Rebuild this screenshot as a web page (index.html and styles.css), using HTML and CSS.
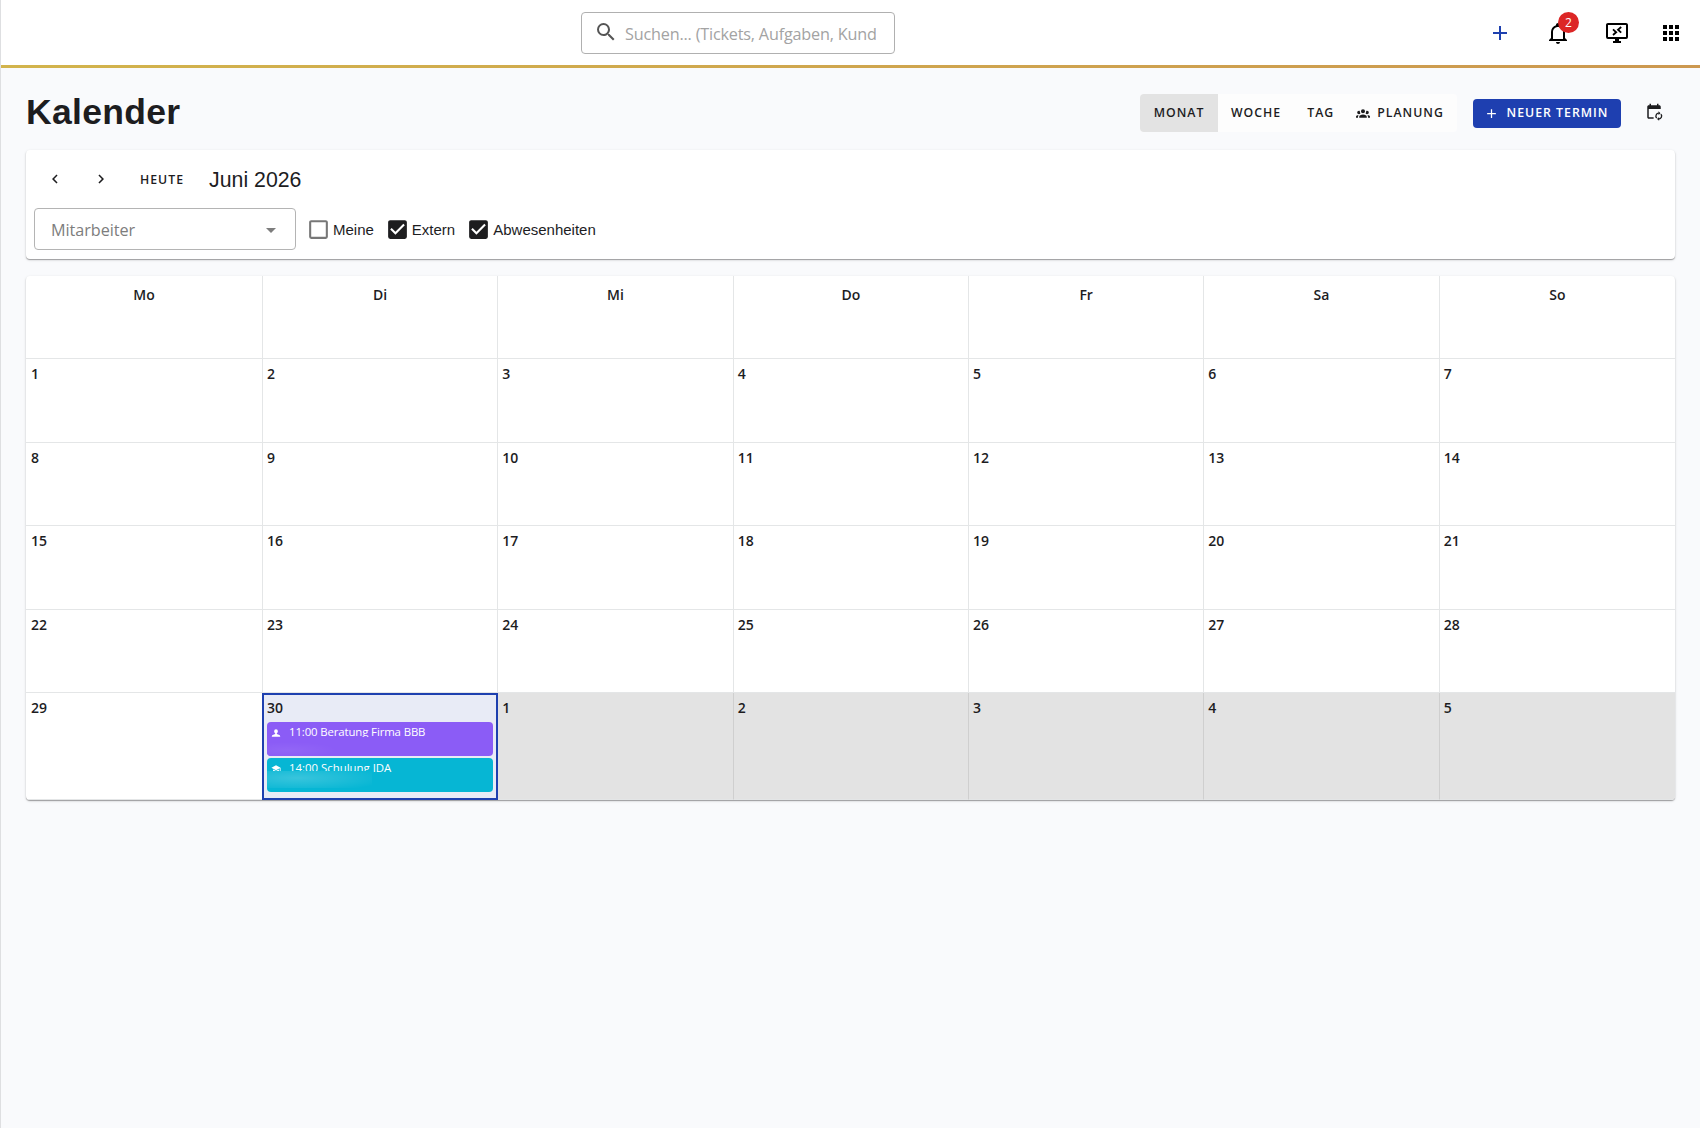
FILE: index.html
```html
<!DOCTYPE html>
<html lang="de">
<head>
    <meta charset="UTF-8">
    <meta name="viewport" content="width=device-width, initial-scale=1.0">
    <title>Kalender</title>
    <link rel="stylesheet" href="styles.css">
</head>
<body>
    <header class="topbar">
        <div class="search">
            <svg class="icon" viewBox="0 0 24 24"><path d="M9.5,3A6.5,6.5 0 0,1 16,9.5C16,11.11 15.41,12.59 14.44,13.73L14.71,14H15.5L20.5,19L19,20.5L14,15.5V14.71L13.73,14.44C12.59,15.41 11.11,16 9.5,16A6.5,6.5 0 0,1 3,9.5A6.5,6.5 0 0,1 9.5,3M9.5,5C7,5 5,7 5,9.5C5,12 7,14 9.5,14C12,14 14,12 14,9.5C14,7 12,5 9.5,5Z"/></svg>
            <input class="search-text" type="text" placeholder="Suchen... (Tickets, Aufgaben, Kunden)">
        </div>
        <nav class="top-actions">
            <button class="top-btn add"><svg class="icon" viewBox="0 0 24 24"><path d="M19,13H13V19H11V13H5V11H11V5H13V11H19V13Z"/></svg></button>
            <button class="top-btn bell"><svg class="icon" viewBox="0 0 24 24"><path d="M10 21H14C14 22.1 13.1 23 12 23S10 22.1 10 21M21 19V20H3V19L5 17V11C5 7.9 7 5.2 10 4.3V4C10 2.9 10.9 2 12 2S14 2.9 14 4V4.3C17 5.2 19 7.9 19 11V17L21 19M17 11C17 8.2 14.8 6 12 6S7 8.2 7 11V18H17V11Z"/></svg><span class="badge">2</span></button>
            <button class="top-btn remote"><svg class="icon" viewBox="0 0 24 24"><path d="M21,16H3V4H21M21,2H3C1.89,2 1,2.89 1,4V16A2,2 0 0,0 3,18H10V20H8V22H16V20H14V18H21A2,2 0 0,0 23,16V4C23,2.89 22.1,2 21,2Z"/><path class="stroke" d="M8,8.4L11.2,11.2L8,14M16.2,6L13,8.8L16.2,11.6"/></svg></button>
            <button class="top-btn apps"><svg class="icon" viewBox="0 0 24 24"><path d="M16,20H20V16H16M16,14H20V10H16M10,8H14V4H10M16,8H20V4H16M10,14H14V10H10M4,14H8V10H4M4,20H8V16H4M10,20H14V16H10M4,8H8V4H4V8Z"/></svg></button>
        </nav>
    </header>

    <main class="page">
        <div class="page-head">
            <h1>Kalender</h1>
            <div class="view-toggle">
                <button class="view active">Monat</button>
                <button class="view">Woche</button>
                <button class="view">Tag</button>
                <button class="view planning"><svg class="icon" viewBox="0 0 24 24"><path d="M12,5.5A3.5,3.5 0 0,1 15.5,9A3.5,3.5 0 0,1 12,12.5A3.5,3.5 0 0,1 8.5,9A3.5,3.5 0 0,1 12,5.5M5,8C5.56,8 6.08,8.15 6.53,8.42C6.38,9.85 6.8,11.27 7.66,12.38C7.16,13.34 6.16,14 5,14A3,3 0 0,1 2,11A3,3 0 0,1 5,8M19,8A3,3 0 0,1 22,11A3,3 0 0,1 19,14C17.84,14 16.84,13.34 16.34,12.38C17.2,11.27 17.62,9.85 17.47,8.42C17.92,8.15 18.44,8 19,8M5.5,18.25C5.5,16.18 8.41,14.5 12,14.5C15.59,14.5 18.5,16.18 18.5,18.25V20H5.5V18.25M0,20V18.5C0,17.11 1.89,15.94 4.45,15.6C3.86,16.28 3.5,17.22 3.5,18.25V20H0M24,20H20.5V18.25C20.5,17.22 20.14,16.28 19.55,15.6C22.11,15.94 24,17.11 24,18.5V20Z"/></svg><span>Planung</span></button>
            </div>
            <button class="new-btn"><svg class="icon" viewBox="0 0 24 24"><path d="M19,13H13V19H11V13H5V11H11V5H13V11H19V13Z"/></svg><span>Neuer Termin</span></button>
            <button class="sync-btn"><svg class="icon" viewBox="0 0 24 24"><path d="M19,3H18V1H16V3H8V1H6V3H5C3.9,3 3,3.9 3,5V19C3,20.1 3.9,21 5,21H11.5V19H5V8H21V5C21,3.9 20.1,3 19,3Z"/><path class="stroke" d="M15.6,20.2A3.9,3.9 0 0,1 18.5,13.6M21.2,14.8A3.9,3.9 0 0,1 18.3,21.3"/><path d="M18,11.1L20.7,13.6L18,16.1ZM18.8,18.8L16,21.3L18.8,23.8Z"/></svg></button>
        </div>

        <section class="card filters">
            <div class="period">
                <button class="nav-btn"><svg class="icon" viewBox="0 0 24 24"><path d="M15.41,16.58L10.83,12L15.41,7.41L14,6L8,12L14,18L15.41,16.58Z"/></svg></button>
                <button class="nav-btn"><svg class="icon" viewBox="0 0 24 24"><path d="M8.59,16.58L13.17,12L8.59,7.41L10,6L16,12L10,18L8.59,16.58Z"/></svg></button>
                <button class="today">Heute</button>
                <h2>Juni 2026</h2>
            </div>
            <div class="filter-row">
                <div class="select"><span>Mitarbeiter</span><svg class="icon" viewBox="0 0 24 24"><path d="M7,10L12,15L17,10H7Z"/></svg></div>
                <label class="check"><svg class="icon off" viewBox="0 0 24 24"><path d="M19,3H5C3.89,3 3,3.89 3,5V19A2,2 0 0,0 5,21H19A2,2 0 0,0 21,19V5C21,3.89 20.1,3 19,3M19,5V19H5V5H19Z"/></svg>Meine</label>
                <label class="check"><svg class="icon" viewBox="0 0 24 24"><path d="M10,17L5,12L6.41,10.58L10,14.17L17.59,6.58L19,8M19,3H5C3.89,3 3,3.89 3,5V19A2,2 0 0,0 5,21H19A2,2 0 0,0 21,19V5C21,3.89 20.1,3 19,3Z"/></svg>Extern</label>
                <label class="check"><svg class="icon" viewBox="0 0 24 24"><path d="M10,17L5,12L6.41,10.58L10,14.17L17.59,6.58L19,8M19,3H5C3.89,3 3,3.89 3,5V19A2,2 0 0,0 5,21H19A2,2 0 0,0 21,19V5C21,3.89 20.1,3 19,3Z"/></svg>Abwesenheiten</label>
            </div>
        </section>

        <section class="card month">
            <div class="weekday">Mo</div><div class="weekday">Di</div><div class="weekday">Mi</div><div class="weekday">Do</div><div class="weekday">Fr</div><div class="weekday">Sa</div><div class="weekday">So</div>
            <div class="day">1</div><div class="day">2</div><div class="day">3</div><div class="day">4</div><div class="day">5</div><div class="day">6</div><div class="day">7</div>
            <div class="day">8</div><div class="day">9</div><div class="day">10</div><div class="day">11</div><div class="day">12</div><div class="day">13</div><div class="day">14</div>
            <div class="day">15</div><div class="day">16</div><div class="day">17</div><div class="day">18</div><div class="day">19</div><div class="day">20</div><div class="day">21</div>
            <div class="day">22</div><div class="day">23</div><div class="day">24</div><div class="day">25</div><div class="day">26</div><div class="day">27</div><div class="day">28</div>
            <div class="day">29</div>
            <div class="day current">
                <span>30</span>
                <div class="event consulting">
                    <svg class="icon" viewBox="0 0 24 24"><path d="M12,3A4.5,4.5 0 0,1 16.5,7.5C16.5,9.5 15.2,11.5 14,12.5V14.5L20,16.5C21.3,17 22,18 22,19V21H2V19C2,18 2.7,17 4,16.5L10,14.5V12.5C8.8,11.5 7.5,9.5 7.5,7.5A4.5,4.5 0 0,1 12,3Z"/></svg>
                    <span>11:00 Beratung Firma BBB</span>
                    <i class="veil"></i>
                </div>
                <div class="event training">
                    <svg class="icon" viewBox="0 0 24 24"><path d="M12,3L1,9L12,15L21,10.09V17H23V9M5,13.18V17.18L12,21L19,17.18V13.18L12,17L5,13.18Z"/></svg>
                    <span>14:00 Schulung IDA</span>
                    <i class="veil"></i>
                </div>
            </div>
            <div class="day outside">1</div><div class="day outside">2</div><div class="day outside">3</div><div class="day outside">4</div><div class="day outside">5</div>
        </section>
    </main>
</body>
</html>
```
FILE: styles.css
```css
* {
    box-sizing: border-box;
}
body {
    margin: 0;
    min-height: 1128px;
    background: #f9fafc;
    border-left: 1px solid #dedfe1;
    color: #1d1d1f;
    font-family: "Open Sans", "Noto Sans", sans-serif;
}
button {
    display: flex;
    align-items: center;
    justify-content: center;
    padding: 0;
    border: none;
    background: none;
    color: inherit;
    font-family: inherit;
}
.icon {
    display: block;
    flex: none;
    width: 24px;
    height: 24px;
    fill: currentColor;
}
.stroke {
    fill: none;
    stroke: currentColor;
    stroke-width: 1.8;
}

/* top bar */
.topbar {
    display: flex;
    height: 68px;
    padding-top: 12px;
    background: #fff;
    border-bottom: 3px solid;
    border-image: linear-gradient(90deg, #d2b44c, #cc9850) 1;
}
.search {
    display: flex;
    align-items: center;
    width: 314px;
    height: 42px;
    margin-left: 580px;
    padding: 0 18px 0 12px;
    border: 1px solid #b0b0b0;
    border-radius: 4px;
    color: #555;
}
.search .icon {
    margin-top: -2px;
}
.search-text {
    flex: 1;
    min-width: 0;
    margin-left: 7px;
    padding: 2px 0 0;
    border: none;
    outline: none;
    background: none;
    font-family: inherit;
    font-size: 16.2px;
    letter-spacing: -0.18px;
}
.search-text::placeholder {
    color: #a3a3a3;
}
.top-actions {
    display: flex;
    align-items: center;
    height: 42px;
    margin-left: auto;
    padding-right: 17px;
    color: #000;
}
.top-btn {
    position: relative;
}
.add {
    margin-right: 34px;
    color: #1e40af;
}
.bell {
    margin-right: 35px;
}
.remote {
    margin-right: 30px;
}
.badge {
    position: absolute;
    left: 12px;
    top: -9px;
    width: 21px;
    height: 21px;
    border-radius: 50%;
    background: #dc2626;
    color: #fff;
    font-size: 12px;
    line-height: 21px;
}

/* page head */
.page {
    padding: 26px 25px 0;
}
.page-head {
    display: flex;
    align-items: center;
    height: 38px;
}
h1 {
    margin: -2px 0 0;
    flex: 1;
    font-family: "Liberation Sans", Arial, sans-serif;
    font-size: 35.5px;
    line-height: 38px;
    letter-spacing: 0.3px;
}
.view-toggle {
    display: flex;
    width: 317px;
    height: 38px;
    overflow: hidden;
    border-radius: 4px;
    background: #fdfdfd;
}
.view, .new-btn, .today {
    font-size: 12.3px;
    font-weight: 600;
    letter-spacing: 1px;
    line-height: 18px;
    text-transform: uppercase;
}
.view {
    padding: 0 13px;
}
.view.active {
    width: 78px;
    background: #e3e3e3;
}
.view .icon {
    width: 14px;
    height: 14px;
    margin-right: 7px;
}
.planning {
    padding-left: 9px;
}
.new-btn {
    width: 148px;
    height: 29px;
    margin-left: 16px;
    padding-right: 2px;
    border-radius: 4px;
    background: #1e3fb0;
    color: #fff;
}
.new-btn .icon {
    width: 15px;
    height: 15px;
    margin-right: 8px;
}
.sync-btn {
    width: 36px;
    height: 36px;
    margin: -2px 3px 0 15px;
}
.sync-btn .icon {
    width: 18px;
    height: 18px;
}

/* cards */
.card {
    background: #fff;
    border-radius: 4px;
    box-shadow: 0 1px 1px rgba(0, 0, 0, 0.3), 0 1px 3px rgba(0, 0, 0, 0.14);
}
.filters {
    height: 109px;
    margin-top: 18px;
    padding: 7px 8px;
}
.period {
    display: flex;
    align-items: center;
    height: 44px;
}
.nav-btn {
    width: 42px;
    margin-right: 4px;
}
.nav-btn .icon {
    width: 18px;
    height: 18px;
}
.today {
    margin: 2px 0 0 14px;
}
h2 {
    margin: 2px 0 0 25px;
    font-family: "Liberation Sans", Arial, sans-serif;
    font-size: 21.3px;
    font-weight: 400;
}
.filter-row {
    display: flex;
    align-items: center;
    margin-top: 7px;
}
.select {
    display: flex;
    align-items: center;
    justify-content: space-between;
    width: 262px;
    height: 42px;
    margin-right: 10px;
    padding: 1px 12px 0 16px;
    border: 1px solid #b4b4b4;
    border-radius: 4px;
    color: #7d7d7d;
    font-size: 16.2px;
    letter-spacing: -0.05px;
}
.check {
    display: flex;
    align-items: center;
    margin-right: 11px;
    font-family: "Liberation Sans", Arial, sans-serif;
    font-size: 15px;
}
.check .icon {
    width: 25px;
    height: 25px;
    margin-right: 2px;
}
.check .off {
    color: #777;
}

/* month grid */
.month {
    display: grid;
    grid-template-columns: 237px repeat(6, 1fr);
    grid-template-rows: 83px repeat(4, 83.5px) 107px;
    margin-top: 17px;
    overflow: hidden;
    font-size: 14px;
    font-weight: 600;
    line-height: 20px;
}
.weekday, .day {
    border-right: 1px solid #e4e6e7;
    border-bottom: 1px solid #e4e6e7;
}
.weekday {
    padding-top: 9px;
    text-align: center;
}
.day {
    padding: 5px 4px;
}
.day:nth-child(7n + 1) {
    padding-left: 5px;
}
.day:nth-child(7n), .weekday:nth-child(7n) {
    border-right: none;
}
.day:nth-child(n + 43) {
    border-bottom: none;
}
.outside {
    background: #e3e3e3;
    border-right-color: #cfcfcf;
}
.current {
    margin-left: -1px;
    padding: 3px 3px;
    border: 2px solid #1e40af !important;
    background: #e8ebf6;
}
.current > span {
    display: block;
    height: 24px;
}
.event {
    position: relative;
    display: flex;
    height: 34px;
    margin-bottom: 2px;
    border-radius: 4px;
    color: #fff;
    font-size: 11.4px;
    font-weight: 400;
    line-height: 20px;
    overflow: hidden;
}
.event .icon {
    width: 10px;
    height: 10px;
    margin: 6px 8px 0 4px;
}
.consulting {
    background: #8b5cf6;
    letter-spacing: -0.12px;
}
.training {
    background: #06b6d4;
}
/* soft cover over the lower part of an event */
.veil {
    position: absolute;
    left: 0;
    top: 15px;
    width: 105px;
    height: 19px;
    background: radial-gradient(ellipse 50px 8px at 20px 13px, rgba(255, 255, 255, 0.06), rgba(255, 255, 255, 0)) #8b5cf6;
}
.training .veil {
    top: 13px;
    height: 17px;
    background: radial-gradient(ellipse 90px 14px at 30px 7px, rgba(255, 255, 255, 0.2), rgba(255, 255, 255, 0)) #06b6d4;
}
```
